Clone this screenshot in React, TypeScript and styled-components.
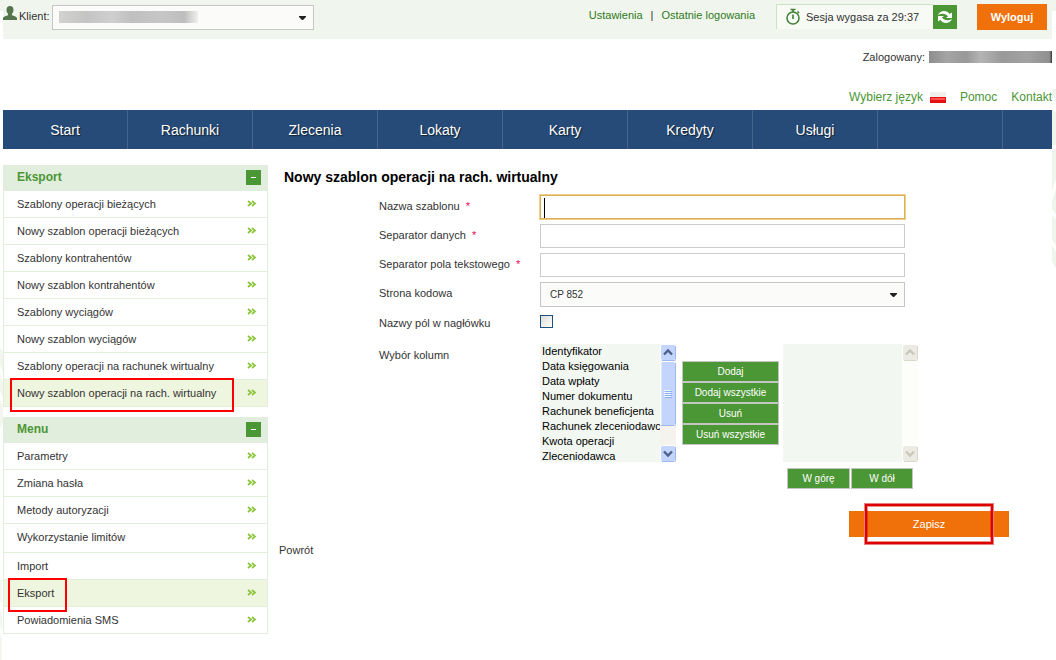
import React from "react";
import styled, { createGlobalStyle } from "styled-components";

const green = "#4b9635";
const orange = "#f0700a";

const GlobalStyle = createGlobalStyle`
  * { box-sizing: border-box; }
  body {
    margin: 0;
    min-height: 100vh;
    background: #fff linear-gradient(#f0f5ed, #f0f5ed) no-repeat 0 0 / 100% 11px;
    color: #333;
    font: 11px/14px "Liberation Sans", Arial, sans-serif;
  }
  button, input, select { font: inherit; color: inherit; border-radius: 0; margin: 0; }
  a { color: inherit; text-decoration: none; }
  ul { list-style: none; margin: 0; padding: 0; }
`;

const Page = styled.div`
  position: relative;
  padding: 0 4px 0 3px;
`;

const Leaves = styled.svg<{ $side: "left" | "right"; $top: number }>`
  position: absolute;
  top: ${(p) => p.$top}px;
  ${(p) => p.$side}: 0;
`;

const TopBar = styled.header`
  display: flex;
  justify-content: space-between;
  align-items: flex-start;
  height: 39px;
  background: #f0f5ed;
`;

const Client = styled.div`
  display: flex;
  align-items: flex-start;
  padding-top: 5px;

  label { margin: 4px 2px 0 2px; }
`;

const SelectWrap = styled.div<{ $width: string }>`
  position: relative;
  width: ${(p) => p.$width};
  height: 25px;
`;

const Select = styled.select`
  appearance: none;
  width: 100%;
  height: 25px;
  padding: 0 24px 0 9px;
  border: 1px solid #c6c6c6;
  background: #fbfcfa;
  font-size: 10px;
  outline: none;
`;

const SelectArrow = styled.svg`
  position: absolute;
  right: 8px;
  top: 11px;
  pointer-events: none;
`;

const Redacted = styled.span<{ $tone: string; $width: number }>`
  display: block;
  width: ${(p) => p.$width}px;
  height: 12px;
  background: ${(p) => p.$tone};
`;

const ClientName = styled(Redacted)`
  position: absolute;
  left: 7px;
  top: 6px;
  pointer-events: none;
`;

const TopRight = styled.div`
  display: flex;
  align-items: flex-start;
  padding: 4px 5px 0 0;
`;

const TopLinks = styled.nav`
  display: flex;
  gap: 8px;
  margin: 4px 21px 0 0;
  a { color: #2f7a1c; }
`;

const Session = styled.div`
  display: flex;
  align-items: center;
  gap: 5px;
  width: 157px;
  height: 25px;
  padding-left: 8px;
  border-left: 1px solid #c9e2c3;
  border-top: 1px solid #c9e2c3;
  background: #f7faf5;
  white-space: nowrap;
`;

const Refresh = styled.button`
  display: flex;
  align-items: center;
  justify-content: center;
  width: 24px;
  height: 24px;
  margin: 1px 20px 0 0;
  padding: 0;
  border: 0;
  background: ${green};
`;

const OrangeButton = styled.button<{ $width: number; $bold?: boolean }>`
  width: ${(p) => p.$width}px;
  height: 26px;
  padding: 0;
  border: 0;
  background: ${orange};
  color: #fff;
  font-weight: ${(p) => (p.$bold ? 700 : 400)};
`;

const LoggedIn = styled.div`
  display: flex;
  justify-content: flex-end;
  align-items: center;
  gap: 4px;
  height: 36px;
`;

const LangRow = styled.nav`
  display: flex;
  justify-content: flex-end;
  align-items: center;
  gap: 14px;
  height: 35px;
  padding-top: 9px;
  color: ${green};
  font-size: 12px;
`;

const Language = styled.a`
  display: flex;
  align-items: center;
  gap: 7px;
`;

const MainNav = styled.nav`
  display: flex;
  height: 39px;
  background: #264b78;
`;

const NavItem = styled.a`
  flex: 0 1 125px;
  border-right: 1px solid #45658c;
  color: #fff;
  font-size: 14px;
  line-height: 40px;
  text-align: center;
  text-shadow: 1px 1px 1px rgba(0, 0, 0, 0.6);
`;

const Columns = styled.div`
  display: flex;
  gap: 11px;
  padding-top: 16px;
`;

const Sidebar = styled.aside`
  flex: 0 0 265px;
  display: flex;
  flex-direction: column;
  gap: 10px;
`;

const PanelHead = styled.div`
  display: flex;
  justify-content: space-between;
  align-items: center;
  height: 26px;
  padding: 0 7px 2px 14px;
  background: #e1eddd;

  h2 { margin: 0; font-size: 12px; color: ${green}; }
`;

const Toggle = styled.button`
  display: flex;
  align-items: center;
  justify-content: center;
  width: 15px;
  height: 15px;
  padding: 0;
  border: 0;
  background: ${green};
`;

const PanelList = styled.ul`
  border: solid #e1eddd;
  border-width: 0 1px;
`;

const PanelItem = styled.li<{ $active?: boolean; $groupEnd?: boolean }>`
  position: relative;
  padding-bottom: ${(p) => (p.$groupEnd ? 2 : 0)}px;
  border-bottom: 1px solid #e3efd9;
  background: ${(p) => (p.$active ? "#eff6df" : "#fff")};

  a {
    display: flex;
    justify-content: space-between;
    align-items: center;
    height: 26px;
    padding: 0 10px 0 13px;
  }
`;

const Marker = styled.span<{ $left: number; $width: number }>`
  position: absolute;
  z-index: 1;
  left: ${(p) => p.$left}px;
  top: -2px;
  width: ${(p) => p.$width}px;
  height: 34px;
  border: 2px solid #f00;
  pointer-events: none;
`;

const Content = styled.main`
  flex: 1;
  min-width: 0;

  h1 {
    margin: 4px 0 10px 5px;
    color: #000;
    font-size: 14px;
    line-height: 16px;
  }
`;

const Form = styled.form`
  display: flex;
  flex-direction: column;
  gap: 5px;
  padding-left: 100px;
`;

const FormRow = styled.div<{ $height?: number }>`
  display: flex;
  align-items: flex-start;
  min-height: ${(p) => p.$height ?? 24}px;
`;

const Label = styled.label`
  flex: 0 0 161px;
  padding-top: 4px;
  white-space: nowrap;

  span { margin-left: 3px; color: #f0005a; }
`;

const TextInput = styled.input<{ $current?: boolean }>`
  flex: 0 1 365px;
  min-width: 0;
  height: 24px;
  padding: 0 4px;
  border: 1px solid ${(p) => (p.$current ? "#dcae55" : "#cbcbcb")};
  box-shadow: ${(p) => (p.$current ? "0 0 0 1px #f0cf8c" : "none")};
  background: ${(p) =>
    p.$current ? "linear-gradient(#000, #000) no-repeat 3px 2px / 1px 20px #fff" : "#fff"};
  outline: none;
`;

const Checkbox = styled.input`
  appearance: none;
  width: 13px;
  height: 13px;
  margin-top: 3px;
  border: 1px solid #1d5180;
  background: linear-gradient(135deg, #dcdcd7, #fff);
`;

const Transfer = styled.div`
  display: flex;
  align-items: flex-start;
`;

const ListBox = styled.div<{ $width: number }>`
  display: flex;
  width: ${(p) => p.$width}px;
  height: 118px;
`;

const List = styled.select`
  flex: 1;
  min-width: 0;
  height: 118px;
  padding: 1px 0 0 1px;
  border: 0;
  background: #f2f7f1;
  color: #000;
  outline: none;
  overflow: hidden;
  scrollbar-width: none;

  option { min-height: 15px; height: 15px; padding: 0 1px; line-height: 15px; }
`;

const Stack = styled.div`
  display: flex;
  flex-direction: column;
  width: 97px;
  margin: 17px 4px 0 6px;
`;

const GreenButton = styled.button<{ $width: string }>`
  width: ${(p) => p.$width};
  height: 21px;
  padding: 0;
  border: 1px solid #c3c6c1;
  background: ${green};
  color: #fff;
  font-size: 10px;
`;

const Order = styled.div`
  display: flex;
  gap: 1px;
  padding: 6px 0 0 4px;
`;

const Actions = styled.div`
  display: flex;
  justify-content: flex-end;
  padding: 17px 43px 0 0;
`;

const SaveWrap = styled.div`
  position: relative;
`;

const SaveMarker = styled.span`
  position: absolute;
  inset: -7px 16px;
  border: 2px solid #dc0000;
  box-shadow: 0 0 0 1px #e98080, inset 0 0 0 1px rgba(220, 0, 0, 0.45);
  pointer-events: none;
`;

const Back = styled.a`
  display: inline-block;
  margin-top: 6px;
`;

const Arrow = () => (
  <SelectArrow width="7" height="4" aria-hidden="true">
    <path d="M0 0h7v1L4 4H3L0 1z" fill="#222" />
  </SelectArrow>
);

const Chevrons = () => (
  <svg width="10" height="8" viewBox="0 0 10 8" aria-hidden="true">
    <path d="M1 1l3 2.5L1 6M5 1l3 2.5L5 6" fill="none" stroke="#8cc63f" strokeWidth="1.8" />
  </svg>
);

const ScrollBar = ({ enabled }: { enabled?: boolean }) => {
  const face = enabled ? "#c3d5fd" : "#ecebe3";
  const edge = enabled ? "#9db8ee" : "#d9d8cd";
  const glyph = enabled ? "#4d6185" : "#c9c7ba";
  return (
    <svg width="16" height="118" aria-hidden="true">
      <rect width="16" height="118" fill={enabled ? "#f4f3ee" : "#fdfdf9"} />
      {[0, 101].map((y) => (
        <g key={y} transform={`translate(0 ${y})`}>
          <rect x="0.5" y="0.5" width="15" height="16" rx="2" fill={face} stroke="#fff" />
          <path d="M2 16.5h12.5q1 0 1-1V2" fill="none" stroke={edge} />
          <path d={y === 0 ? "M4 10.5l4-4 4 4" : "M4 6.5l4 4 4-4"} fill="none" stroke={glyph} strokeWidth="2.4" />
        </g>
      ))}
      {enabled && (
        <g>
          <rect x="0.5" y="17.5" width="15" height="64" rx="2" fill={face} stroke="#fff" />
          <path d="M1.5 18v62" stroke="#dbe6ff" />
          <path d="M1 81.5h13.5q1 0 1-1V19" fill="none" stroke={edge} />
          <path d="M4 46.5h7M4 48.5h7M4 50.5h7M4 52.5h7" stroke="#eef4fe" />
          <path d="M5 47.5h7M5 49.5h7M5 51.5h7M5 53.5h7" stroke="#8cb0f8" />
        </g>
      )}
    </svg>
  );
};

type Entry = { text: string; active?: boolean; groupEnd?: boolean; marker?: [number, number] };

const exportItems: Entry[] = [
  { text: "Szablony operacji bieżących" },
  { text: "Nowy szablon operacji bieżących" },
  { text: "Szablony kontrahentów" },
  { text: "Nowy szablon kontrahentów" },
  { text: "Szablony wyciągów" },
  { text: "Nowy szablon wyciągów" },
  { text: "Szablony operacji na rachunek wirtualny" },
  { text: "Nowy szablon operacji na rach. wirtualny", active: true, marker: [6, 224] },
];

const menuItems: Entry[] = [
  { text: "Parametry" },
  { text: "Zmiana hasła" },
  { text: "Metody autoryzacji" },
  { text: "Wykorzystanie limitów", groupEnd: true },
  { text: "Import" },
  { text: "Eksport", active: true, marker: [4, 59] },
  { text: "Powiadomienia SMS" },
];

const Panel = ({ title, items }: { title: string; items: Entry[] }) => (
  <section>
    <PanelHead>
      <h2>{title}</h2>
      <Toggle type="button" aria-label={`Zwiń ${title}`}>
        <svg width="5" height="1" aria-hidden="true"><rect width="5" height="1" fill="#fff" /></svg>
      </Toggle>
    </PanelHead>
    <PanelList>
      {items.map((item) => (
        <PanelItem key={item.text} $active={item.active} $groupEnd={item.groupEnd}>
          <a href="#">{item.text}<Chevrons /></a>
          {item.marker && <Marker $left={item.marker[0]} $width={item.marker[1]} />}
        </PanelItem>
      ))}
    </PanelList>
  </section>
);

const columnNames = [
  "Identyfikator", "Data księgowania", "Data wpłaty", "Numer dokumentu",
  "Rachunek beneficjenta", "Rachunek zleceniodawcy", "Kwota operacji", "Zleceniodawca",
];

export default function App() {
  return (
    <Page>
      <GlobalStyle />
      <Leaves $side="left" $top={345} width="3" height="85" aria-hidden="true">
        <path d="M0 2l3 5v20L0 20zM0 30l3 8v14L0 46zM0 55l3 6v16L0 84z" fill="#f3f5ef" />
      </Leaves>
      <Leaves $side="left" $top={580} width="2" height="80" aria-hidden="true">
        <path d="M0 0h2v25L0 20zM0 30l2 6v14L0 46zM0 52l2 6v22H0z" fill="#f4f6f0" />
      </Leaves>
      <Leaves $side="right" $top={89} width="4" height="180" aria-hidden="true">
        <path d="M0 0h4v9H0zM0 20l4 4v32H0zM0 60h4v30l-4 12zM0 120l4 5V100L0 112zM0 126l4 5v25l-4-5zM0 157l4 6v17l-4-8z" fill="#eff4ed" />
      </Leaves>

      <TopBar>
        <Client>
          <svg width="14" height="16" viewBox="0 0 14 16" aria-hidden="true">
            <path d="M7 1c2.300 0 3.500 1.700 3.500 3.800 0 1.600-.6 3-1.500 3.900v1.600c1.800.6 5 1.500 5 3.200V15H0v-1.500c0-1.700 3.200-2.600 5-3.200V8.700c-.9-.9-1.500-2.300-1.500-3.900C3.500 2.700 4.700 1 7 1z" fill="#55754d" />
          </svg>
          <label htmlFor="client">Klient:</label>
          <SelectWrap $width="262px">
            <Select id="client" />
            <ClientName $width={139} $tone="linear-gradient(90deg, #d2d2d1, #c4c4c4 20%, #cfcfcf 38%, #c0c0c0 52%, #c6c6c6 75%, #bdbdbd 90%, #f0f0ef)" />
            <Arrow />
          </SelectWrap>
        </Client>
        <TopRight>
          <TopLinks>
            <a href="#">Ustawienia</a>
            <span>|</span>
            <a href="#">Ostatnie logowania</a>
          </TopLinks>
          <Session>
            <svg width="16" height="18" viewBox="0 0 16 18" fill="none" stroke="#3e8030" aria-hidden="true">
              <circle cx="8" cy="10" r="6" strokeWidth="1.500" />
              <path d="M5.500 1.500h5M8 2v2M12.500 3.500l1.500 1.500M8 6.500V11" strokeWidth="1.600" />
            </svg>
            Sesja wygasa za 29:37
          </Session>
          <Refresh type="button" aria-label="Odśwież sesję">
            <svg width="18" height="16" viewBox="0 0 18 16" aria-hidden="true">
              <path d="M2 6C4 1.500 10.500 .5 13.500 5L16 3.500V9h-6l2-1.500C10 4.500 6 4 2 6z" fill="#fff" />
              <path d="M16 10c-2 4.500-8.500 5.500-11.500 1L2 12.500V7h6L6 8.500c2 3 6 3.500 10 1.500z" fill="#fff" />
            </svg>
          </Refresh>
          <OrangeButton type="button" $width={70} $bold>Wyloguj</OrangeButton>
        </TopRight>
      </TopBar>

      <LoggedIn>
        Zalogowany:
        <Redacted $width={123} $tone="linear-gradient(90deg, #8d8d8d, #a5a5a5 15%, #989898 30%, #b4b4b4 42%, #999 60%, #a2a2a2 80%, #8f8f8f 98%, #333)" />
      </LoggedIn>
      <LangRow>
        <Language href="#">
          Wybierz język
          <svg width="16" height="11" aria-hidden="true">
            <rect width="16" height="11" fill="#f1eeee" />
            <rect y="5" width="16" height="6" fill="#e60f14" />
            <rect x="1" y="6" width="14" height="2" fill="#ff5050" />
          </svg>
        </Language>
        <a href="#">Pomoc</a>
        <a href="#">Kontakt</a>
      </LangRow>

      <MainNav>
        {["Start", "Rachunki", "Zlecenia", "Lokaty", "Karty", "Kredyty", "Usługi"].map((name) => (
          <NavItem key={name} href="#">{name}</NavItem>
        ))}
        <NavItem as="span" />
      </MainNav>

      <Columns>
        <Sidebar>
          <Panel title="Eksport" items={exportItems} />
          <Panel title="Menu" items={menuItems} />
        </Sidebar>

        <Content>
          <h1>Nowy szablon operacji na rach. wirtualny</h1>
          <Form onSubmit={(e) => e.preventDefault()}>
            <FormRow>
              <Label htmlFor="name">Nazwa szablonu <span>*</span></Label>
              <TextInput id="name" $current />
            </FormRow>
            <FormRow>
              <Label htmlFor="separator">Separator danych <span>*</span></Label>
              <TextInput id="separator" />
            </FormRow>
            <FormRow>
              <Label htmlFor="text-separator">Separator pola tekstowego <span>*</span></Label>
              <TextInput id="text-separator" />
            </FormRow>
            <FormRow>
              <Label htmlFor="code-page">Strona kodowa</Label>
              <SelectWrap $width="365px">
                <Select id="code-page"><option>CP 852</option></Select>
                <Arrow />
              </SelectWrap>
            </FormRow>
            <FormRow $height={27}>
              <Label htmlFor="header-names">Nazwy pól w nagłówku</Label>
              <Checkbox id="header-names" type="checkbox" />
            </FormRow>
            <FormRow>
              <Label htmlFor="columns">Wybór kolumn</Label>
              <Transfer>
                <ListBox $width={136}>
                  <List id="columns" multiple>
                    {columnNames.map((name) => <option key={name}>{name}</option>)}
                  </List>
                  <ScrollBar enabled />
                </ListBox>
                <Stack>
                  {["Dodaj", "Dodaj wszystkie", "Usuń", "Usuń wszystkie"].map((name) => (
                    <GreenButton key={name} type="button" $width="100%">{name}</GreenButton>
                  ))}
                </Stack>
                <div>
                  <ListBox $width={135}>
                    <List multiple aria-label="Wybrane kolumny" />
                    <ScrollBar />
                  </ListBox>
                  <Order>
                    <GreenButton type="button" $width="63px">W górę</GreenButton>
                    <GreenButton type="button" $width="62px">W dół</GreenButton>
                  </Order>
                </div>
              </Transfer>
            </FormRow>
            <Actions>
              <SaveWrap>
                <OrangeButton type="submit" $width={160}>Zapisz</OrangeButton>
                <SaveMarker />
              </SaveWrap>
            </Actions>
          </Form>
          <Back href="#">Powrót</Back>
        </Content>
      </Columns>
    </Page>
  );
}
